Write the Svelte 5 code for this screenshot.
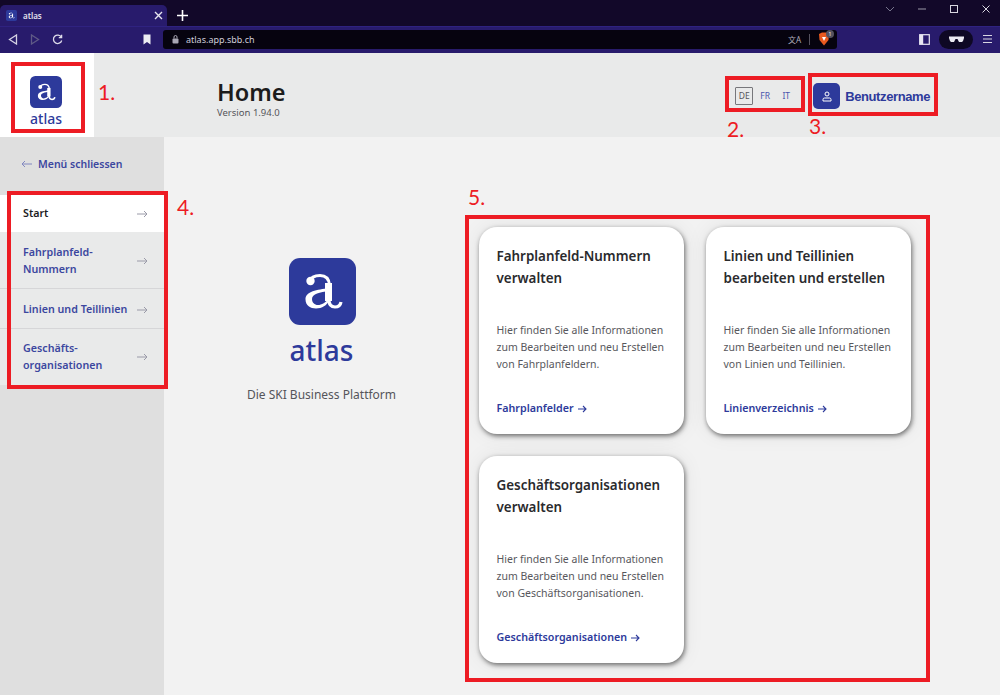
<script>
  const menu = [
    { label: "Start", active: true },
    { label: "Fahrplanfeld-\nNummern" },
    { label: "Linien und Teillinien" },
    { label: "Geschäfts-\norganisationen" }
  ];
  const cards = [
    { title: "Fahrplanfeld-Nummern verwalten", tail: "von Fahrplanfeldern.", link: "Fahrplanfelder" },
    { title: "Linien und Teillinien bearbeiten und erstellen", tail: "von Linien und Teillinien.", link: "Linienverzeichnis" },
    { title: "Geschäftsorganisationen verwalten", tail: "von Geschäftsorganisationen.", link: "Geschäftsorganisationen" }
  ];
  // red annotation boxes on top of the screenshot
  const marks = [
    { n: "1.", x: 11, y: 62, w: 74, h: 71, lx: 98, ly: 79 },
    { n: "2.", x: 725, y: 76, w: 80, h: 36, lx: 727, ly: 116 },
    { n: "3.", x: 808, y: 73, w: 130, h: 43, lx: 809, ly: 113 },
    { n: "4.", x: 7, y: 191, w: 161, h: 198, lx: 177, ly: 194 },
    { n: "5.", x: 465, y: 215, w: 465, h: 467, lx: 468, ly: 184 }
  ];
</script>

{#snippet logo(size)}
  <svg class="logo" width={size} height={size} viewBox="0 0 67 67">
    <rect width="67" height="67" rx="11" fill="#2d3a9b" />
    <circle cx="21.5" cy="23" r="4.2" fill="#fff" />
    <path d="M20 24C22 19 27 17.500 31 17.500C37 17.500 40 21 40.500 27" fill="none" stroke="#fff" stroke-width="3" />
    <path d="M39.500 25V43" fill="none" stroke="#fff" stroke-width="7" />
    <path d="M40 42C40 47.500 43 49 46 49C49.500 49 51.500 47 52 44" fill="none" stroke="#fff" stroke-width="3.2" />
    <path d="M40 30C28 32 16.500 33 16.500 41.500C16.500 47.500 21.500 50.500 27 50.500C33 50.500 38 47 40 43V40C37 44.500 32.500 47 29 47C25.500 47 23 44.500 23 41C23 36 31 34 40 33Z" fill="#fff" />
  </svg>
{/snippet}

<div class="page">
  <div class="tabstrip">
    <div class="tab">
      {@render logo(11)}
      <span class="tabtitle">atlas</span>
      <svg class="tabclose" width="9" height="9" viewBox="0 0 9 9"><path d="M1 1l7 7M8 1l-7 7" stroke="#e8e6f0" stroke-width="1.4" /></svg>
    </div>
    <svg class="newtab" width="11" height="11" viewBox="0 0 11 11"><path d="M5.500 0v11M0 5.500h11" stroke="#fff" stroke-width="1.6" /></svg>
    <div class="winbtns">
      <svg width="10" height="6" viewBox="0 0 10 6"><path d="M1 1l4 4 4-4" fill="none" stroke="#77748c" stroke-width="1" /></svg>
      <svg width="10" height="10" viewBox="0 0 10 10"><path d="M1 5h8" stroke="#9a98a8" stroke-width="1" /></svg>
      <svg width="10" height="10" viewBox="0 0 10 10"><rect x="1.500" y="1.500" width="7" height="7" fill="none" stroke="#d8d6e0" stroke-width="1" /></svg>
      <svg width="10" height="10" viewBox="0 0 10 10"><path d="M1.500 1.500l7 7M8.500 1.500l-7 7" stroke="#d8d6e0" stroke-width="1" /></svg>
    </div>
  </div>

  <div class="toolbar">
    <svg class="nav" width="10" height="11" viewBox="0 0 10 11"><path d="M8.500 1v9L1.500 5.500z" fill="none" stroke="#d5d2e4" stroke-width="1.3" /></svg>
    <svg class="nav dim" width="10" height="11" viewBox="0 0 10 11"><path d="M1.500 1v9l7-4.500z" fill="none" stroke="#5f5a86" stroke-width="1.3" /></svg>
    <svg class="nav" width="11" height="11" viewBox="0 0 11 11"><path d="M9.300 3.200A4.200 4.200 0 1 0 9.700 6.500M9.600 0.800v2.800H6.800" fill="none" stroke="#dedbea" stroke-width="1.3" /></svg>
    <svg class="bookmark" width="8" height="11" viewBox="0 0 8 11"><path d="M0.500 0.500h7v10L4 8 0.500 10.500z" fill="#ececf2" /></svg>
    <div class="urlbar">
      <svg width="7" height="9" viewBox="0 0 7 9"><rect x="0.500" y="3.500" width="6" height="5" rx="1" fill="#a9a7b4" /><path d="M2 3.500V2a1.500 1.500 0 0 1 3 0v1.500" fill="none" stroke="#a9a7b4" /></svg>
      <span class="url">atlas.app.sbb.ch</span>
      <span class="translate">文<b>A</b></span>
      <span class="urlsep"></span>
      <span class="shield">
        <svg width="12" height="14" viewBox="0 0 12 14"><path d="M1 2l3-1.500h4L11 2l-.5 6L6 13.500 1.500 8z" fill="#e8591f" /><path d="M4 5h4L6 9z" fill="#fff" /></svg>
        <span class="shieldcount">1</span>
      </span>
    </div>
    <svg class="sidepanel" width="11" height="11" viewBox="0 0 11 11"><rect x="0.700" y="0.700" width="9.600" height="9.600" fill="none" stroke="#e8e6f2" stroke-width="1.2" /><rect x="0.700" y="0.700" width="3.500" height="9.600" fill="#e8e6f2" /></svg>
    <div class="glasses">
      <svg width="15" height="7" viewBox="0 0 15 7"><path d="M0 0.500h15v1.500l-1 3-1 1H10L8.500 3h-2L5 6H2L1 5 0 2z" fill="#ecebf2" /></svg>
    </div>
    <svg class="burger" width="9" height="10" viewBox="0 0 9 10"><path d="M0 1.500h9M0 5h9M0 8.500h9" stroke="#d8d6e2" stroke-width="1.2" /></svg>
  </div>

  <header class="appheader">
    <div class="brandcell">
      <div class="brand">
        {@render logo(32)}
        <span class="wordmark small">atlas</span>
      </div>
    </div>
    <div class="heading">
      <h1>Home</h1>
      <span class="version">Version 1.94.0</span>
    </div>
    <div class="langs">
      <span class="lang current">DE</span>
      <span class="lang">FR</span>
      <span class="lang">IT</span>
    </div>
    <div class="user">
      <span class="avatar">
        <svg width="10" height="11" viewBox="0 0 10 11"><circle cx="5" cy="3" r="2" fill="none" stroke="#fff" stroke-width="1" /><path d="M1 10V8.500Q1 7 2.500 7h5Q9 7 9 8.500V10z" fill="none" stroke="#fff" stroke-width="1" /></svg>
      </span>
      <span class="username">Benutzername</span>
    </div>
  </header>

  <div class="body">
    <aside class="sidebar">
      <div class="closemenu">
        <svg width="11" height="8" viewBox="0 0 11 8"><path d="M11 4H1M4 1L1 4l3 3" fill="none" stroke="#8288c0" stroke-width="1" /></svg>
        <span>Menü schliessen</span>
      </div>
      <nav>
        {#each menu as item}
          <div class="item" class:active={item.active}>
            <span class="itemlabel">{item.label}</span>
            <svg width="11" height="8" viewBox="0 0 11 8"><path d="M0 4h10M7 1l3 3-3 3" fill="none" stroke="#9a9aa8" stroke-width="1" /></svg>
          </div>
        {/each}
      </nav>
    </aside>

    <main class="content">
      <section class="intro">
        {@render logo(67)}
        <span class="wordmark big">atlas</span>
        <p>Die SKI Business Plattform</p>
      </section>
      <section class="cards">
        {#each cards as card}
          <article class="card">
            <h2>{card.title}</h2>
            <p>Hier finden Sie alle Informationen zum Bearbeiten und neu Erstellen {card.tail}</p>
            <a href="#top" class="cardlink">{card.link}
              <svg width="9" height="8" viewBox="0 0 9 8"><path d="M0 4h8M5 1l3 3-3 3" fill="none" stroke="#2d3a9b" stroke-width="1.1" /></svg>
            </a>
          </article>
        {/each}
      </section>
    </main>
  </div>

  {#each marks as m}
    <div class="mark" style="left:{m.x}px;top:{m.y}px;width:{m.w}px;height:{m.h}px"></div>
    <div class="marklabel" style="left:{m.lx}px;top:{m.ly}px">{m.n}</div>
  {/each}
</div>

<style>
  :global(body) {
    margin: 0;
    background: #f2f2f2;
  }

  .page {
    position: relative;
    width: 1000px;
    height: 695px;
    overflow: hidden;
    font-family: "Noto Sans", "Open Sans", sans-serif;
    color: #1d1d1f;
  }

  /* browser chrome */
  .tabstrip {
    height: 26px;
    background: #120829;
    display: flex;
    align-items: flex-end;
  }
  .tab {
    width: 167px;
    height: 21px;
    background: #281b6c;
    border-radius: 5px 5px 0 0;
    display: flex;
    align-items: center;
    box-sizing: border-box;
    padding: 0 4px 0 6px;
    gap: 6px;
  }
  .tabtitle {
    font-size: 8px;
    font-weight: 600;
    color: #e4e2ee;
    flex: 1;
  }
  .newtab {
    margin: 0 0 5px 10px;
  }
  .winbtns {
    margin-left: auto;
    align-self: flex-start;
    display: flex;
    align-items: center;
    gap: 22px;
    padding: 4px 9px 0 0;
    height: 10px;
  }
  .toolbar {
    height: 27px;
    background: #281b6c;
    border-top: 1px solid #2f2280;
    box-sizing: border-box;
    display: flex;
    align-items: center;
    padding: 0 0 2px 8px;
  }
  .nav {
    margin-right: 12px;
  }
  .bookmark {
    margin-left: 68px;
  }
  .urlbar {
    width: 674px;
    height: 19px;
    margin-left: 12px;
    background: #06030f;
    border-radius: 3px;
    display: flex;
    align-items: center;
    padding: 0 3px 0 9px;
    box-sizing: border-box;
  }
  .url {
    margin-left: 7px;
    font-size: 9px;
    color: #cfcdd9;
    flex: 1;
  }
  .translate {
    font-size: 8px;
    color: #b0aebb;
    font-family: "Noto Sans CJK SC", sans-serif;
  }
  .translate b {
    font-weight: 400;
    font-family: "Noto Sans", sans-serif;
  }
  .urlsep {
    width: 1px;
    height: 11px;
    background: #55525f;
    margin: 0 8px;
  }
  .shield {
    position: relative;
    width: 16px;
    display: flex;
  }
  .shieldcount {
    position: absolute;
    left: 8px;
    top: -2px;
    width: 8px;
    height: 8px;
    border-radius: 50%;
    background: #55525f;
    color: #fff;
    font-size: 5px;
    line-height: 8px;
    text-align: center;
  }
  .sidepanel {
    margin-left: 82px;
  }
  .glasses {
    width: 34px;
    height: 19px;
    margin-left: 9px;
    border-radius: 10px;
    background: #0e0824;
    display: flex;
    align-items: center;
    justify-content: center;
  }
  .burger {
    margin-left: 10px;
  }

  /* app header */
  .appheader {
    height: 84px;
    background: #e9eaea;
    display: flex;
    align-items: center;
  }
  .brandcell {
    width: 94px;
    height: 100%;
    background: #fff;
    display: flex;
    align-items: center;
  }
  .brand {
    width: 92px;
    display: flex;
    flex-direction: column;
    align-items: center;
    padding-top: 14px;
  }
  .logo {
    display: block;
    flex: none;
  }
  .intro .logo {
    margin-left: 2px;
  }
  .wordmark {
    color: #2d3a9b;
    display: block;
  }
  .wordmark.small {
    font-size: 14px;
    line-height: 18px;
    margin-top: 2px;
    font-weight: 500;
  }
  .wordmark.big {
    font-size: 28px;
    line-height: 36px;
    margin-top: 7px;
    font-weight: 500;
  }
  .heading {
    margin-left: 123px;
    padding-top: 6px;
    display: flex;
    flex-direction: column;
  }
  h1 {
    margin: 0;
    font-size: 23.5px;
    line-height: 30px;
    font-weight: 600;
    color: #1c1c1c;
  }
  .version {
    font-size: 9.5px;
    line-height: 12px;
    color: #55555a;
  }
  .langs {
    margin-left: auto;
    display: flex;
    align-items: center;
    gap: 3px;
    margin-right: 18px;
    padding-top: 1px;
  }
  .lang {
    width: 18px;
    height: 18px;
    box-sizing: border-box;
    font-size: 8.5px;
    line-height: 15px;
    text-align: center;
    border: 1.5px solid transparent;
    color: #4a55ad;
  }
  .lang.current {
    border-color: #77777b;
    color: #55555a;
    border-radius: 1px;
  }
  .user {
    display: flex;
    align-items: center;
    gap: 5px;
    margin-right: 70px;
    padding-top: 2px;
  }
  .avatar {
    width: 27px;
    height: 26px;
    background: #2d3a9b;
    border-radius: 5px;
    display: flex;
    align-items: center;
    justify-content: center;
  }
  .username {
    font-family: "Liberation Sans", sans-serif;
    font-size: 13px;
    font-weight: 700;
    letter-spacing: -0.4px;
    color: #2d3a9b;
  }

  /* sidebar + content */
  .body {
    display: flex;
    height: 558px;
  }
  .sidebar {
    width: 164px;
    flex: none;
    background: #dfdfdf;
  }
  .closemenu {
    height: 58px;
    box-sizing: border-box;
    padding: 20px 0 0 21px;
    display: flex;
    align-items: flex-start;
    gap: 6px;
    font-size: 10.5px;
    line-height: 15px;
    font-weight: 600;
    color: #3c479f;
  }
  .closemenu svg {
    margin-top: 3px;
  }
  .item {
    background: #e9eaea;
    border-bottom: 1px solid #d6d6d8;
    display: flex;
    align-items: center;
    justify-content: space-between;
    padding: 12px 16px 10px 23px;
    font-size: 10.7px;
    line-height: 17px;
    font-weight: 600;
    color: #3c479f;
  }
  .item.active {
    background: #fff;
    color: #1d1d1f;
    padding: 10px 16px 10px 23px;
    border-bottom: 0;
    height: 37px;
    box-sizing: border-box;
  }
  .item:last-child {
    border-bottom: 0;
    padding: 11px 16px 11px 23px;
  }
  .itemlabel {
    white-space: pre-line;
  }
  .content {
    flex: 1;
    background: #f2f2f2;
    display: flex;
  }
  .intro {
    width: 315px;
    flex: none;
    display: flex;
    flex-direction: column;
    align-items: center;
    padding-top: 121px;
    box-sizing: border-box;
  }
  .intro p {
    margin: 19px 0 0;
    font-size: 12px;
    line-height: 16px;
    color: #55555a;
  }
  .cards {
    display: grid;
    grid-template-columns: 205px 205px;
    grid-auto-rows: 207px;
    gap: 22px;
    padding-top: 90px;
  }
  .card {
    background: #fff;
    border-radius: 18px;
    box-shadow: 1px 2px 5px rgba(0, 0, 0, 0.55), 0 0 22px rgba(0, 0, 0, 0.07);
    box-sizing: border-box;
    padding: 18px 17px 17px 17.5px;
    display: flex;
    flex-direction: column;
  }
  h2 {
    margin: 0;
    font-size: 13.4px;
    line-height: 22px;
    height: 46px;
    font-weight: 600;
    color: #2a2a2d;
  }
  .card p {
    margin: 31px 0 0;
    font-size: 10.5px;
    line-height: 17px;
    color: #58585d;
  }
  .cardlink {
    margin-top: auto;
    font-size: 10.7px;
    line-height: 17px;
    font-weight: 600;
    color: #2d3a9b;
    text-decoration: none;
    display: flex;
    align-items: center;
    gap: 4px;
  }

  /* annotations */
  .mark {
    position: absolute;
    box-sizing: border-box;
    border: 4px solid #ed1c24;
    pointer-events: none;
  }
  .marklabel {
    position: absolute;
    font-family: "Lato", sans-serif;
    font-size: 21px;
    line-height: 26px;
    color: #ed1c24;
  }
</style>
